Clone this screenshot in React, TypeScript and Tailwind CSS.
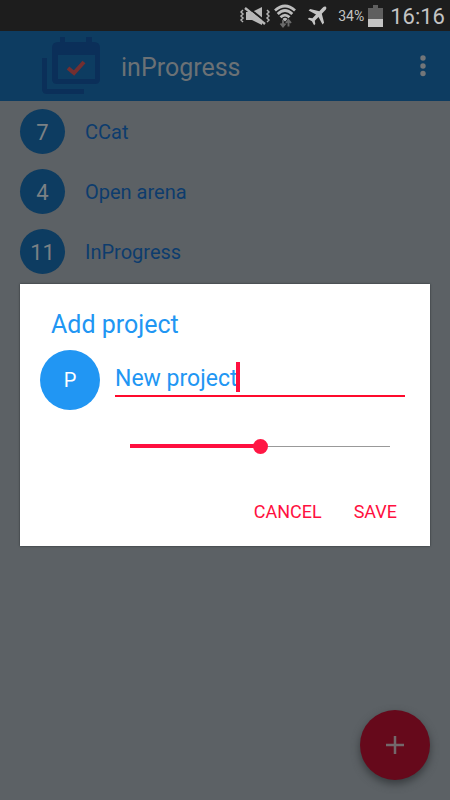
import { useState } from 'react';

const projects = [
  { count: 7, name: 'CCat' },
  { count: 4, name: 'Open arena' },
  { count: 11, name: 'InProgress' },
];

function MutedIcon() {
  return (
    <svg width="30" height="20" viewBox="0 0 30 20" aria-hidden="true">
      <g fill="none" stroke="#b0b0b0" strokeWidth="1.5">
        <path d="M3 4l-2 2 2 2-2 2 2 2-2 2 2 2M27 4l2 2-2 2 2 2-2 2 2 2-2 2" />
      </g>
      <path d="M6 6h6l10-5v18l-10-5H6z" fill="#b8b8b8" />
      <path d="M6 0l20 16" stroke="#1d1d1d" strokeWidth="2" />
      <path d="M5 2l20 16" stroke="#b8b8b8" strokeWidth="2.4" />
    </svg>
  );
}

function WifiIcon() {
  return (
    <svg width="22" height="24" viewBox="0 0 22 24" aria-hidden="true">
      <g fill="none" stroke="#bdbdbd" strokeWidth="2.800">
        <path d="M1 6.500Q11-2.500 21 6.500M3.700 10Q11 3 18.300 10M6.500 13.200Q11 9 15.500 13.200" />
      </g>
      <path d="M8.500 15Q11 12.600 13.500 15L11 17.500z" fill="#bdbdbd" />
      <path d="M9 16v6M6.500 19.500L9 22.500l2.500-3M14.500 22.500v-6M12 19l2.500-3 2.500 3" fill="none" stroke="#6b6b6b" strokeWidth="1.900" />
    </svg>
  );
}

function PlaneIcon() {
  return (
    <svg width="20" height="20" viewBox="0 0 20 20" fill="#c4c4c4" aria-hidden="true">
      <path d="M19 .9c-.9-.7-2.300-.2-3.400.9L12.300 5.200 3.200 3 1.600 4.600 9 8.500 5.400 12.300l-3.400-.5L.8 13l4.100 2.200L7.100 19.300l1.200-1.200-.5-3.400 3.700-3.600 4 7.300 1.600-1.600L14.800 7.700l3.400-3.400c1.100-1.100 1.600-2.600.8-3.400z" />
    </svg>
  );
}

function StatusBar() {
  return (
    <div className="flex h-[31px] items-center justify-end bg-[#1d1d1d] pr-[5px] text-[#c4c4c4]">
      <MutedIcon />
      <span className="ml-1"><WifiIcon /></span>
      <span className="ml-[11px]"><PlaneIcon /></span>
      <span className="ml-[11px] pt-px text-sm">34%</span>
      <svg className="ml-1" width="15" height="22" viewBox="0 0 15 22" aria-hidden="true">
        <path d="M5 0h5v3h5v19H0V3h5z" fill="#5f5f5f" />
        <path d="M0 14h15v8H0z" fill="#c4c4c4" />
      </svg>
      <span className="ml-[7px] pt-px text-[22px]">16:16</span>
    </div>
  );
}

function Logo() {
  return (
    <svg className="ml-[42px] shrink-0" width="58" height="58" viewBox="0 0 58 58" aria-hidden="true">
      <path d="M0 21h5v31h37v5H5q-5 0-5-5z" fill="#0b2f59" />
      <path fillRule="evenodd" d="M18 0h5v5h21V0h6v5h2q6 0 6 6v31q0 5-5 5H15q-5 0-5-5V11q0-6 6-6h2zM16 18v24h37V18z" fill="#0b2f59" />
      <path d="M26 31l6 5 10-11" fill="none" stroke="#732f31" strokeWidth="4" />
    </svg>
  );
}

function AddProjectDialog() {
  const [name, setName] = useState('New project');
  const [value, setValue] = useState(50);
  return (
    <div className="absolute inset-0 flex items-center px-5 pt-[30px]">
      <form
        role="dialog"
        aria-labelledby="dialog-title"
        className="w-full bg-white pb-3 shadow-[0_0_2px_#2a3034]"
        onSubmit={(e) => e.preventDefault()}
      >
        <h2 id="dialog-title" className="px-[31px] pt-[25px] text-[25px] leading-8 text-[#2196f3]">Add project</h2>
        <div className="mt-[9px] flex gap-[15px] pr-[25px] pl-5">
          <div className="flex size-[60px] shrink-0 items-center justify-center rounded-full bg-[#2196f3] text-xl text-white">P</div>
          <div className="mt-3 flex h-[35px] min-w-0 flex-1 items-start border-b-2 border-[#ff0a2c]">
            <input
              aria-label="Project name"
              className="field-sizing-content h-[34px] max-w-full min-w-0 bg-transparent text-[23px] text-[#2196f3] caret-[#ff1040] outline-none"
              value={name}
              onChange={(e) => setName(e.target.value)}
            />
            <span className="-ml-px h-[30px] w-1 bg-[#ff1040]" />
          </div>
        </div>
        <input
          type="range"
          aria-label="Project value"
          min={0}
          max={100}
          value={value}
          onChange={(e) => setValue(Number(e.target.value))}
          style={{ backgroundSize: `${value}% 4px, 100% 1px` }}
          className="mt-7 ml-[110px] block h-4 w-[calc(100%-150px)] appearance-none bg-[linear-gradient(#ff1040,#ff1040),linear-gradient(#999,#999)] bg-[position:left_center] bg-no-repeat outline-none [&::-webkit-slider-thumb]:size-[15px] [&::-webkit-slider-thumb]:appearance-none [&::-webkit-slider-thumb]:rounded-full [&::-webkit-slider-thumb]:bg-[#ff1744]"
        />
        <div className="mt-9 flex justify-end gap-4 pr-[25px] text-lg text-[#ff1040]">
          <button type="button" className="h-11 px-2">CANCEL</button>
          <button type="submit" className="h-11 px-2">SAVE</button>
        </div>
      </form>
    </div>
  );
}

export default function App() {
  return (
    <div className="relative flex min-h-screen flex-col bg-[#5c6165] font-['Roboto','Liberation_Sans',sans-serif]">
      <StatusBar />
      <header className="flex h-[70px] items-center bg-[#0d3c61] pr-[10px]">
        <Logo />
        <h1 className="ml-[21px] flex-1 pt-1 text-[25px] text-[#6b7175]">inProgress</h1>
        <button type="button" aria-label="More options" className="flex h-10 w-[35px] items-center justify-center">
          <svg width="6" height="22" viewBox="0 0 6 22" fill="#737679" aria-hidden="true">
            <circle cx="3" cy="3" r="2.700" />
            <circle cx="3" cy="11" r="2.700" />
            <circle cx="3" cy="18.500" r="2.700" />
          </svg>
        </button>
      </header>
      <ul>
        {projects.map((p) => (
          <li key={p.name} className="flex h-[60px] items-center gap-5 px-5">
            <span className="flex size-[45px] items-center justify-center rounded-full bg-[#0d3c61] pt-[2px] text-[22px] text-[#7b8185]">{p.count}</span>
            <span className="pt-[2px] text-xl text-[#0d3c6d]">{p.name}</span>
          </li>
        ))}
      </ul>
      <button
        type="button"
        aria-label="Add project"
        className="mt-auto mr-5 mb-5 flex size-[70px] items-center justify-center self-end rounded-full bg-[#66091b] shadow-[0_4px_8px_#373b3e]"
      >
        <svg width="18" height="18" viewBox="0 0 18 18" aria-hidden="true">
          <path d="M9 0v18M0 9h18" stroke="#73686b" strokeWidth="2.500" />
        </svg>
      </button>
      <AddProjectDialog />
    </div>
  );
}
